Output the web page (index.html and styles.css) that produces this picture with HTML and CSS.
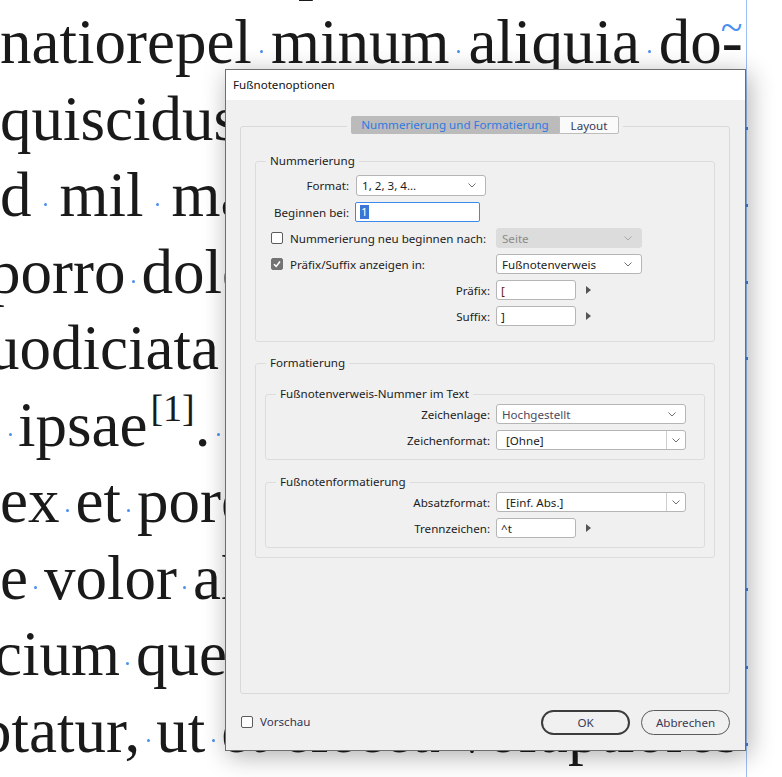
FILE: index.html
```html
<!DOCTYPE html>
<html lang="de">
<head>
    <meta charset="UTF-8">
    <meta name="viewport" content="width=device-width, initial-scale=1.0">
    <title>Fußnotenoptionen</title>
    <link rel="stylesheet" href="styles.css">
</head>
<body>
    <!-- Textrahmen im Hintergrund -->
    <div class="page">
        <div class="column">
            <div class="line l0">pore<span class="sp"></span>nist<span class="sp"></span>et<span class="sp"></span>volo</div>
            <div class="line l1">natiorepel<span class="sp"></span>minum<span class="sp"></span>aliquia<span class="sp"></span>do-<span class="tilde">~</span></div>
            <div class="line l2">quiscidus<span class="sp"></span>quatur<span class="sp"></span>magnis<span class="sp"></span>et</div>
            <div class="line l3">d<span class="sp wide"></span>mil<span class="sp wide"></span>maximus<span class="sp wide"></span>aut</div>
            <div class="line l4">porro<span class="sp"></span>dolorit<span class="sp"></span>atiatur<span class="sp"></span>sit</div>
            <div class="line l5">uodiciata<span class="sp"></span>sunt<span class="sp"></span>omnis<span class="sp"></span>id</div>
            <div class="line l6"><span class="sp"></span>ipsae<sup>[1]</sup>.<span class="sp"></span>Ut<span class="sp"></span>aut<span class="sp"></span>qui</div>
            <div class="line l7">ex<span class="sp"></span>et<span class="sp"></span>porerum<span class="sp"></span>sint</div>
            <div class="line l8">e<span class="sp"></span>volor<span class="sp"></span>alibus<span class="sp"></span>dem</div>
            <div class="line l9">cium<span class="sp"></span>que<span class="sp"></span>sunt<span class="sp"></span>volor</div>
            <div class="line l10">ptatur,<span class="sp"></span>ut<span class="sp"></span>et<span class="sp"></span>eiecea<span class="sp"></span>voluptiorest</div>
        </div>
    </div>

    <!-- Markierungen am Rahmenrand -->
    <span class="mark" style="top:127px"></span>
    <span class="mark" style="top:204px"></span>
    <span class="mark" style="top:281px"></span>
    <span class="mark" style="top:357px"></span>
    <span class="mark" style="top:588px"></span>
    <span class="mark" style="top:666px"></span>
    <span class="mark" style="top:743px"></span>

    <!-- Dialog -->
    <div class="dialog">
        <div class="title">Fußnotenoptionen</div>
        <div class="body">
            <div class="tabs">
                <div class="tab-strip">
                    <span class="tab active">Nummerierung und Formatierung</span>
                    <span class="tab">Layout</span>
                </div>
            </div>

            <div class="panel">
                <!-- Nummerierung -->
                <div class="group numbering">
                    <div class="legend">Nummerierung</div>
                    <div class="row short">
                        <span class="label">Format:</span>
                        <div class="select w-format">1, 2, 3, 4...<svg class="chev" width="8" height="5" viewBox="0 0 8 5"><polyline points="0.5,0.5 4,4 7.5,0.5"/></svg></div>
                    </div>
                    <div class="row short">
                        <span class="label">Beginnen bei:</span>
                        <div class="field focus w-start"><span class="sel">1</span></div>
                    </div>
                    <div class="grid">
                        <label class="check"><span class="box"></span>Nummerierung neu beginnen nach:</label>
                        <div class="select disabled">Seite<svg class="chev" width="8" height="5" viewBox="0 0 8 5"><polyline points="0.5,0.5 4,4 7.5,0.5"/></svg></div>

                        <label class="check"><span class="box checked"><svg width="10" height="10" viewBox="0 0 10 10"><polyline points="2,5.2 4.2,7.4 8,2.6"/></svg></span>Präfix/Suffix anzeigen in:</label>
                        <div class="select">Fußnotenverweis<svg class="chev" width="8" height="5" viewBox="0 0 8 5"><polyline points="0.5,0.5 4,4 7.5,0.5"/></svg></div>

                        <span class="label">Präfix:</span>
                        <div class="inline"><div class="field w-small"><span class="bracket">[</span></div><span class="arrow"></span></div>

                        <span class="label">Suffix:</span>
                        <div class="inline"><div class="field w-small">]</div><span class="arrow"></span></div>
                    </div>
                </div>

                <!-- Formatierung -->
                <div class="group formatting">
                    <div class="legend">Formatierung</div>

                    <div class="sub">
                        <div class="legend">Fußnotenverweis-Nummer im Text</div>
                        <div class="sub-grid">
                            <span class="label">Zeichenlage:</span>
                            <div class="select muted">Hochgestellt<svg class="chev" width="8" height="5" viewBox="0 0 8 5"><polyline points="0.5,0.5 4,4 7.5,0.5"/></svg></div>
                            <span class="label">Zeichenformat:</span>
                            <div class="combo"><span class="value">[Ohne]</span><span class="drop"><svg class="chev" width="8" height="5" viewBox="0 0 8 5"><polyline points="0.5,0.5 4,4 7.5,0.5"/></svg></span></div>
                        </div>
                    </div>

                    <div class="sub">
                        <div class="legend">Fußnotenformatierung</div>
                        <div class="sub-grid">
                            <span class="label">Absatzformat:</span>
                            <div class="combo"><span class="value">[Einf. Abs.]</span><span class="drop"><svg class="chev" width="8" height="5" viewBox="0 0 8 5"><polyline points="0.5,0.5 4,4 7.5,0.5"/></svg></span></div>
                            <span class="label">Trennzeichen:</span>
                            <div class="inline"><div class="field w-small">^t</div><span class="arrow"></span></div>
                        </div>
                    </div>
                </div>
            </div>

            <div class="footer">
                <label class="check preview"><span class="box"></span>Vorschau</label>
                <div class="buttons">
                    <button class="btn default">OK</button>
                    <button class="btn">Abbrechen</button>
                </div>
            </div>
        </div>
    </div>
</body>
</html>
```

FILE: styles.css
```css
/* Grundlayout */
* {
    box-sizing: border-box;
}

html, body {
    margin: 0;
}

body {
    width: 782px;
    height: 777px;
    overflow: hidden;
    position: relative;
    background: #fff;
}

/* Textrahmen */
.page {
    width: 747px;
    height: 777px;
    overflow: hidden;
    border-right: 1px solid #9dc0f5;
}

.column {
    margin-top: -72.5px;
    font-family: "Liberation Serif", serif;
    font-size: 63px;
    line-height: 76.5px;
    color: #1a1a1a;
}

.line {
    white-space: nowrap;
}

.l0 { margin-left: 298px; }
.l4 { margin-left: -11px; }
.l5 { margin-left: -12px; }
.l6 { margin-left: 2px; }
.l9 { margin-left: -6px; }
.l10 { margin-left: -20px; }

/* Leerzeichen-Punkte */
.sp {
    display: inline-block;
    width: 16px;
    height: 1px;
    position: relative;
}

.l1 .sp {
    width: 19px;
}

.sp.wide {
    width: 28px;
}

.sp::after {
    content: "";
    position: absolute;
    left: calc(50% - 1.5px);
    top: -12px;
    width: 3px;
    height: 3px;
    border-radius: 50%;
    background: #4a8ff0;
}

.tilde {
    color: #4a8ff0;
    font-size: 40px;
    line-height: 0;
    vertical-align: 22px;
    margin-left: -22px;
}

sup {
    font-size: 38px;
    line-height: 0;
    vertical-align: 25px;
    margin-left: 3px;
}

.mark {
    position: absolute;
    left: 745px;
    width: 3px;
    height: 3px;
    background: #3f82ea;
}

/* Dialogfenster */
.dialog {
    position: absolute;
    left: 225px;
    top: 69px;
    width: 521px;
    height: 682px;
    border: 1px solid #6e6e6e;
    background: #f0f0f0;
    box-shadow: 3px 5px 24px rgba(0, 0, 0, 0.32);
    display: flex;
    flex-direction: column;
    font-family: "Noto Sans", sans-serif;
    font-size: 11.6px;
    color: #1c1c1c;
}

.title {
    height: 30px;
    line-height: 30px;
    padding-left: 7px;
    background: #fff;
    color: #111;
}

.body {
    flex: 1;
    padding: 16px 15px 0 14px;
    display: flex;
    flex-direction: column;
}

/* Reiter */
.tabs {
    display: flex;
    justify-content: center;
    margin-bottom: -8px;
    position: relative;
    z-index: 1;
}

.tab-strip {
    display: flex;
    padding: 0 4px;
    background: #f0f0f0;
}

.tab {
    height: 18px;
    line-height: 17px;
    text-align: center;
    white-space: nowrap;
}

.tab.active {
    width: 208px;
    background: #bbbbbb;
    color: #2f7ae2;
    border-radius: 2px 0 0 2px;
}

.tab:not(.active) {
    width: 60px;
    background: #fafafa;
    border: 1px solid #bdbdbd;
    border-radius: 0 2px 2px 0;
    color: #393956;
}

.panel {
    height: 568px;
    border: 1px solid #d9d9d9;
    border-radius: 3px;
    padding: 34px 14px 0 14px;
}

/* Gruppen */
.group, .sub {
    border: 1px solid #dcdcdc;
    border-radius: 3px;
}

.legend {
    display: table;
    margin: -9px 0 0 10px;
    padding: 0 4px;
    line-height: 16px;
    background: #f0f0f0;
}

.numbering {
    padding: 0 0 15px 15px;
}

.numbering .legend {
    margin-left: -5px;
}

.formatting {
    margin-top: 21px;
    padding: 0 9px 9px 9px;
}

.formatting > .legend {
    margin-left: 1px;
    margin-bottom: 23px;
}

.sub + .sub {
    margin-top: 22px;
}

.sub .legend {
    margin-left: 10px;
}

.row {
    display: flex;
    align-items: center;
    gap: 6px;
    margin-top: 6px;
}

.row:first-of-type {
    margin-top: 7px;
}

.row.short .label {
    width: 78px;
}

.label {
    text-align: right;
    white-space: nowrap;
}

.grid {
    display: grid;
    grid-template-columns: 219px 146px;
    column-gap: 6px;
    row-gap: 6px;
    align-items: center;
    margin-top: 6px;
}

.sub-grid {
    display: grid;
    grid-template-columns: 1fr 190px;
    column-gap: 6px;
    row-gap: 6px;
    align-items: center;
    padding: 2px 18px 9px 10px;
}

/* Steuerelemente */
.select, .field, .combo {
    height: 20px;
    background: #fff;
    border: 1px solid #b5b5b5;
    border-radius: 3px;
    display: flex;
    align-items: center;
    white-space: nowrap;
}

.select {
    padding-left: 5px;
}

.chev {
    fill: none;
    stroke: #6f6f6f;
    stroke-width: 1;
}

.select .chev {
    margin-left: auto;
    margin-right: 9px;
}

.w-format {
    width: 130px;
    height: 21px;
    margin-left: 1px;
}

.w-start {
    width: 125px;
}

.field {
    padding-left: 4px;
}

.field.focus {
    border-color: #3b8bef;
    border-radius: 2px;
}

.sel {
    background: #3a76d6;
    color: #fff;
    padding: 0 1px;
    line-height: 14px;
}

.w-small {
    width: 80px;
}

.bracket {
    color: #6a1a08;
}

.select.disabled {
    background: #dcdcdc;
    border-color: #dcdcdc;
    color: #8b8b8b;
}

.select.disabled .chev {
    stroke: #a9a9a9;
}

.select.muted {
    color: #4b4a5c;
}

.combo {
    justify-content: space-between;
}

.combo .value {
    padding-left: 9px;
}

.drop {
    width: 19px;
    height: 100%;
    border-left: 1px solid #cfcfcf;
    display: flex;
    align-items: center;
    justify-content: center;
}

.inline {
    display: flex;
    align-items: center;
}

.arrow {
    margin-left: 10px;
    width: 0;
    height: 0;
    border-top: 4px solid transparent;
    border-bottom: 4px solid transparent;
    border-left: 5px solid #555;
}

/* Kontrollkästchen */
.check {
    display: flex;
    align-items: center;
    gap: 7px;
    white-space: nowrap;
}

.box {
    width: 12px;
    height: 12px;
    border: 1px solid #5c5c5c;
    border-radius: 2px;
    background: #fff;
    display: flex;
    align-items: center;
    justify-content: center;
}

.box.checked {
    background: #737373;
    border-color: #737373;
}

.box svg polyline {
    fill: none;
    stroke: #fff;
    stroke-width: 1.6;
}

/* Fußzeile */
.footer {
    flex: 1;
    display: flex;
    justify-content: space-between;
    align-items: flex-start;
    padding-top: 16px;
}

.preview {
    margin-left: 1px;
    margin-top: 4px;
    color: #383654;
}

.buttons {
    display: flex;
    gap: 11px;
}

.btn {
    width: 89px;
    height: 25px;
    border: 1px solid #5a5a5a;
    border-radius: 13px;
    background: #f0f0f0;
    font-family: "Noto Sans", sans-serif;
    font-size: 11.6px;
    color: #393956;
    padding: 0;
}

.btn.default {
    border: 2px solid #3c3c3c;
}
```
